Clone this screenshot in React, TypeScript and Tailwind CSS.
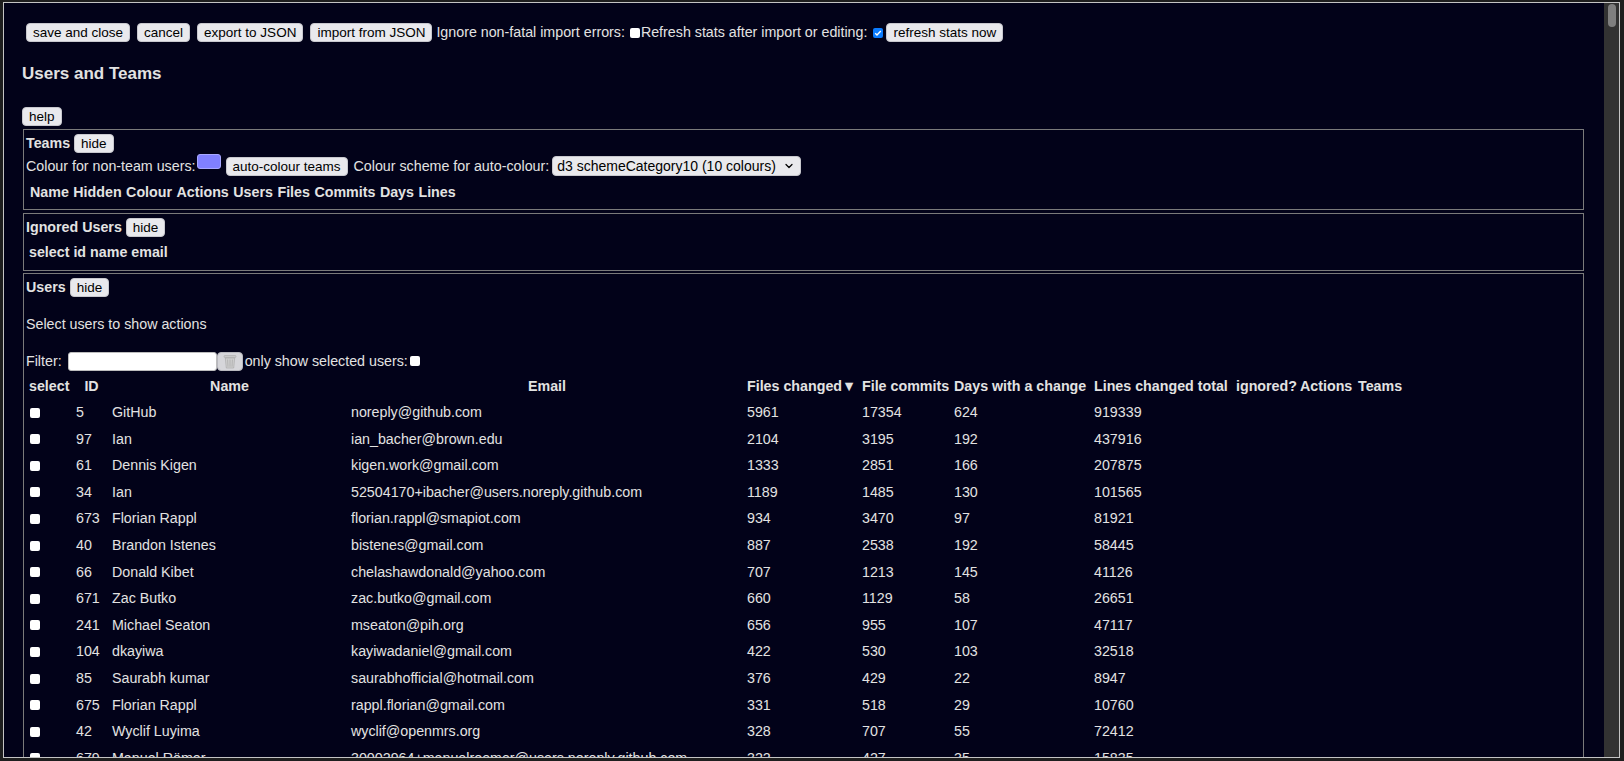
import { ChevronDown } from "lucide-react";

const users = [
  { id: 5, name: "GitHub", email: "noreply@github.com", files: 5961, commits: 17354, days: 624, lines: 919339 },
  { id: 97, name: "Ian", email: "ian_bacher@brown.edu", files: 2104, commits: 3195, days: 192, lines: 437916 },
  { id: 61, name: "Dennis Kigen", email: "kigen.work@gmail.com", files: 1333, commits: 2851, days: 166, lines: 207875 },
  { id: 34, name: "Ian", email: "52504170+ibacher@users.noreply.github.com", files: 1189, commits: 1485, days: 130, lines: 101565 },
  { id: 673, name: "Florian Rappl", email: "florian.rappl@smapiot.com", files: 934, commits: 3470, days: 97, lines: 81921 },
  { id: 40, name: "Brandon Istenes", email: "bistenes@gmail.com", files: 887, commits: 2538, days: 192, lines: 58445 },
  { id: 66, name: "Donald Kibet", email: "chelashawdonald@yahoo.com", files: 707, commits: 1213, days: 145, lines: 41126 },
  { id: 671, name: "Zac Butko", email: "zac.butko@gmail.com", files: 660, commits: 1129, days: 58, lines: 26651 },
  { id: 241, name: "Michael Seaton", email: "mseaton@pih.org", files: 656, commits: 955, days: 107, lines: 47117 },
  { id: 104, name: "dkayiwa", email: "kayiwadaniel@gmail.com", files: 422, commits: 530, days: 103, lines: 32518 },
  { id: 85, name: "Saurabh kumar", email: "saurabhofficial@hotmail.com", files: 376, commits: 429, days: 22, lines: 8947 },
  { id: 675, name: "Florian Rappl", email: "rappl.florian@gmail.com", files: 331, commits: 518, days: 29, lines: 10760 },
  { id: 42, name: "Wyclif Luyima", email: "wyclif@openmrs.org", files: 328, commits: 707, days: 55, lines: 72412 },
  { id: 679, name: "Manuel Römer", email: "30002964+manuelroemer@users.noreply.github.com", files: 322, commits: 427, days: 35, lines: 15835 },
];

function Btn({ children, className = "" }: { children: React.ReactNode; className?: string }) {
  return (
    <button
      className={`h-[19px] px-[6px] rounded-[4px] bg-[#e9e9ed] border border-[#c8c8ce] text-black text-[13.5px] leading-none whitespace-nowrap ${className}`}
    >
      {children}
    </button>
  );
}

function Check() {
  return <input type="checkbox" className="appearance-none w-[10px] h-[10px] bg-white rounded-[2px] m-0 shrink-0 block" />;
}

function TrashIcon() {
  return (
    <svg width="14" height="15" viewBox="0 0 14 15" fill="none">
      <rect x="1" y="1.5" width="12" height="2" rx="0.8" fill="#c9c9c9" stroke="#a9a9a9" strokeWidth="0.6" />
      <path d="M2.3 4h9.4l-1 10H3.3z" fill="#cfcfcf" stroke="#a5a5a5" strokeWidth="0.6" />
      <path d="M4.6 5.5l.4 7.3M7 5.5v7.3M9.4 5.5l-.4 7.3" stroke="#9f9f9f" strokeWidth="0.6" />
    </svg>
  );
}

export default function App() {
  return (
    <div className="w-[1624px] h-[761px] bg-[#1e1e1e] overflow-hidden pt-[2px] pl-[3px] font-['Liberation_Sans',Arial,sans-serif] text-[14.25px] text-[#e2e2e2]">
      <div className="w-[1617px] h-[756px] border border-[#c4c4c4] bg-[#020219] flex">
        <div className="flex-1 min-w-0 overflow-hidden pl-[18px] pr-[20px] pt-[20px]">
          {/* toolbar */}
          <div className="flex items-center h-[19px] ml-[4px] whitespace-nowrap">
            <Btn>save and close</Btn>
            <Btn className="ml-[7px]">cancel</Btn>
            <Btn className="ml-[7px]">export to JSON</Btn>
            <Btn className="ml-[7px]">import from JSON</Btn>
            <span className="ml-[4px]">Ignore non-fatal import errors:</span>
            <span className="ml-[5px]"><Check /></span>
            <span className="ml-[1px]">Refresh stats after import or editing:</span>
            <span className="ml-[6px] w-[10px] h-[10px] rounded-[2px] bg-[#0b7cff] flex items-center justify-center">
              <svg width="8" height="8" viewBox="0 0 8 8" fill="none">
                <path d="M1.2 4.2l1.8 1.8 3.8-4" stroke="white" strokeWidth="1.4" />
              </svg>
            </span>
            <Btn className="ml-[3px]">refresh stats now</Btn>
          </div>

          <h3 className="mt-[20px] h-[24px] leading-[24px] text-[17px] font-bold">Users and Teams</h3>

          <div className="mt-[20px]">
            <Btn>help</Btn>
          </div>

          {/* Teams */}
          <div className="mt-[2px] ml-[1px] border border-[#7a7a7a] px-[2px] pb-[5px]">
            <div className="flex items-center h-[26px] gap-[4px]">
              <span className="font-bold">Teams</span>
              <Btn>hide</Btn>
            </div>
            <div className="flex items-center h-[20px] whitespace-nowrap">
              <span>Colour for non-team users:</span>
              <span className="ml-[1px] w-[24px] h-[15px] rounded-[3px] bg-[#8080ff] border border-[#a8a8ff] self-start -mt-[2px]" />
              <Btn className="ml-[5px]">auto-colour teams</Btn>
              <span className="ml-[6px]">Colour scheme for auto-colour:</span>
              <div className="ml-[3px] h-[20px] rounded-[4px] bg-[#e9e9ed] border border-[#c8c8ce] text-black text-[14px] flex items-center pl-[4px] pr-[5px] gap-[7px]">
                <span>d3 schemeCategory10 (10 colours)</span>
                <ChevronDown className="w-[12px] h-[12px]" strokeWidth={2.5} />
              </div>
            </div>
            <div className="mt-[4px] h-[24px] flex items-center gap-[4.5px] pl-[4px] font-bold">
              <span>Name</span><span>Hidden</span><span>Colour</span><span>Actions</span><span>Users</span>
              <span>Files</span><span>Commits</span><span>Days</span><span>Lines</span>
            </div>
          </div>

          {/* Ignored Users */}
          <div className="mt-[3px] ml-[1px] border border-[#7a7a7a] px-[2px] pb-[6px]">
            <div className="flex items-center h-[26px] gap-[4px]">
              <span className="font-bold">Ignored Users</span>
              <Btn>hide</Btn>
            </div>
            <div className="h-[24px] flex items-center gap-[4px] pl-[3px] font-bold">
              <span>select</span><span>id</span><span>name</span><span>email</span>
            </div>
          </div>

          {/* Users */}
          <div className="mt-[2px] ml-[1px] border border-[#7a7a7a] h-[600px]">
            <div className="flex items-center h-[26px] gap-[4px] px-[2px]">
              <span className="font-bold">Users</span>
              <Btn>hide</Btn>
            </div>
            <p className="mt-[16px] leading-[16px] px-[2px]">Select users to show actions</p>
            <div className="mt-[19px] h-[20px] flex items-center px-[2px] whitespace-nowrap">
              <span>Filter:</span>
              <input className="ml-[6px] w-[149px] h-[19px] bg-white rounded-[3px] border border-[#bdbdbd] outline-none" />
              <span className="w-[26px] h-[19px] rounded-[4px] bg-[#d6d6da] border border-[#b8b8be] flex items-center justify-center">
                <TrashIcon />
              </span>
              <span className="ml-[2px]">only show selected users:</span>
              <span className="ml-[2px]"><Check /></span>
            </div>

            <table className="mt-[2px] table-fixed border-collapse w-[1386px]">
              <colgroup>
                <col className="w-[49px]" />
                <col className="w-[37px]" />
                <col className="w-[239px]" />
                <col className="w-[396px]" />
                <col className="w-[115px]" />
                <col className="w-[92px]" />
                <col className="w-[140px]" />
                <col className="w-[142px]" />
                <col className="w-[64px]" />
                <col className="w-[58px]" />
                <col className="w-[54px]" />
              </colgroup>
              <thead>
                <tr className="h-[26px] font-bold whitespace-nowrap">
                  <th className="text-left pl-[5px] p-0">select</th>
                  <th className="text-center p-0">ID</th>
                  <th className="text-center p-0">Name</th>
                  <th className="text-center p-0">Email</th>
                  <th className="text-left pl-[2px]">Files changed▼</th>
                  <th className="text-left pl-[2px]">File commits</th>
                  <th className="text-left pl-[2px]">Days with a change</th>
                  <th className="text-left pl-[2px]">Lines changed total</th>
                  <th className="text-left pl-[2px]">ignored?</th>
                  <th className="text-left pl-[2px]">Actions</th>
                  <th className="text-left pl-[2px]">Teams</th>
                </tr>
              </thead>
              <tbody>
                {users.map((u) => (
                  <tr key={u.id} className="h-[26.6px] whitespace-nowrap">
                    <td className="pl-[6px]"><Check /></td>
                    <td className="pl-[3px]">{u.id}</td>
                    <td className="pl-[2px]">{u.name}</td>
                    <td className="pl-[2px]">{u.email}</td>
                    <td className="pl-[2px]">{u.files}</td>
                    <td className="pl-[2px]">{u.commits}</td>
                    <td className="pl-[2px]">{u.days}</td>
                    <td className="pl-[2px]">{u.lines}</td>
                    <td />
                    <td />
                    <td />
                  </tr>
                ))}
              </tbody>
            </table>
          </div>
        </div>

        {/* scrollbar */}
        <div className="w-[15px] bg-[#323232] flex justify-center">
          <div className="w-[8px] h-[23px] rounded-full bg-[#7f7f7f] mt-[1px]" />
        </div>
      </div>
    </div>
  );
}
